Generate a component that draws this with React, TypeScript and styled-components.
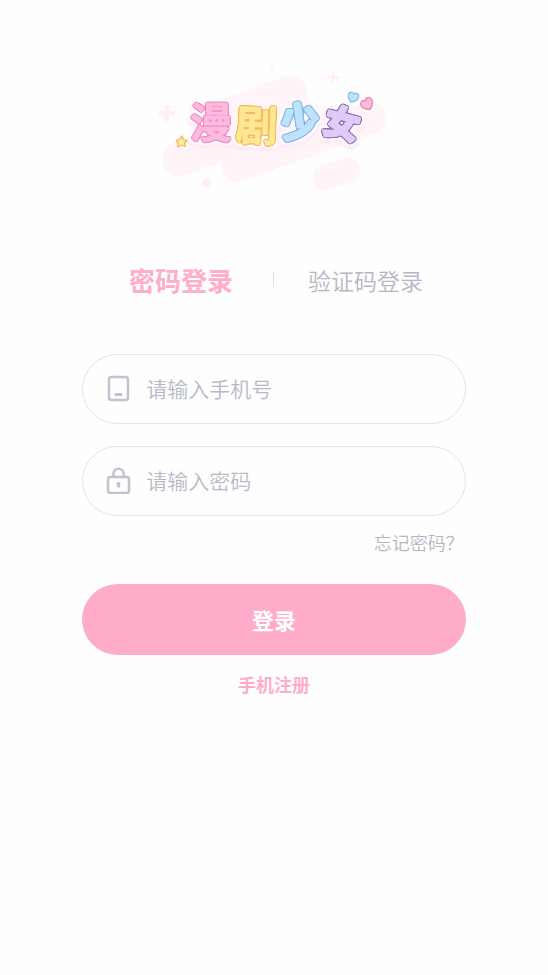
import React, { useState } from 'react';
import styled, { createGlobalStyle } from 'styled-components';

const GlobalStyle = createGlobalStyle`
  *, *::before, *::after { box-sizing: border-box; }
  body {
    margin: 0;
    background: #fefefe;
    font-family: "Noto Sans CJK SC", "Noto Sans", sans-serif;
  }
  button, input { font-family: inherit; }
`;

const Page = styled.main`
  display: flex;
  flex-direction: column;
  align-items: center;
  min-height: 100vh;
  padding: 60px 0;
`;

const Brand = styled.h1`
  margin: 0;
  line-height: 0;
`;

const LogoArt = styled.svg`
  display: block;
  width: 240px;
  height: 140px;
`;

const LogoGlyph = styled.text`
  font-family: "Noto Sans CJK SC", sans-serif;
  font-weight: 700;
  text-anchor: middle;
  stroke-linejoin: round;
`;

const Tabs = styled.div`
  display: flex;
  align-items: center;
  justify-content: center;
  height: 48px;
  margin-top: 56px;
  padding-left: 4px;
`;

const Tab = styled.button<{ $active: boolean }>`
  padding: 0;
  border: 0;
  background: none;
  cursor: pointer;
  line-height: 40px;
  font-size: ${(p) => (p.$active ? 26 : 23)}px;
  font-weight: ${(p) => (p.$active ? 700 : 350)};
  color: ${(p) => (p.$active ? '#ffadc9' : '#b5b7c2')};
`;

const Divider = styled.span`
  width: 1px;
  height: 15px;
  margin: 0 34px 2px 40px;
  background: #dedfe5;
`;

const Form = styled.form`
  display: flex;
  flex-direction: column;
  width: 70%;
  margin-top: 50px;
`;

const Field = styled.label`
  display: flex;
  align-items: center;
  gap: 15px;
  height: 70px;
  margin-bottom: 22px;
  padding: 0 24px 2px 23px;
  border: 1px solid #e4e4e7;
  border-radius: 35px;
`;

const FieldIcon = styled.svg`
  flex: none;
  width: 25px;
  height: 28px;
  fill: none;
  stroke: #bfc4ce;
  stroke-width: 2.5;
  stroke-linecap: round;
  stroke-linejoin: round;
`;

const Input = styled.input`
  flex: 1;
  min-width: 0;
  height: 40px;
  padding: 0;
  border: 0;
  outline: 0;
  background: transparent;
  font-size: 21px;
  font-weight: 350;
  color: #555866;
  &::placeholder { color: #b7bac6; opacity: 1; }
`;

const ForgotLink = styled.a`
  align-self: flex-end;
  margin: -10px 2px 0 0;
  font-size: 18px;
  line-height: 28px;
  font-weight: 350;
  color: #b2b8c3;
  text-decoration: none;
`;

const Submit = styled.button`
  height: 71px;
  margin-top: 28px;
  padding: 0 0 2px;
  border: 0;
  border-radius: 36px;
  background: #ffabca;
  color: #fff;
  font-size: 22px;
  font-weight: 700;
  cursor: pointer;
`;

const RegisterLink = styled.a`
  margin-top: 15px;
  font-size: 18px;
  line-height: 28px;
  font-weight: 700;
  color: #ffadc9;
  text-decoration: none;
`;

const glyphs = [
  { char: '漫', x: 57, y: 78, size: 42, weight: 0.6, rotate: 0, fill: '#ffb9e0', edge: 'pink' },
  { char: '剧', x: 102, y: 81, size: 42, weight: 0.8, rotate: 2, fill: '#ffe794', edge: 'gold' },
  { char: '少', x: 148, y: 75, size: 38, weight: 3, rotate: -8, fill: '#bee2fb', edge: 'blue' },
  { char: '女', x: 185, y: 76, size: 35, weight: 3, rotate: 14, fill: '#dfcaf8', edge: 'violet' },
];

const edges = [
  { id: 'pink', color: '#ee8cc1' },
  { id: 'gold', color: '#f3bb5c' },
  { id: 'blue', color: '#7fb9e6' },
  { id: 'violet', color: '#8c73b0' },
];

const HEART = 'M0 5.500 C-4 3 -6.500 0 -4.500 -3 C-3 -5 -1 -4.500 0 -3 C1 -5 4 -5.500 5 -3 C6.500 0 4 3.500 0 5.500 Z';

function Logo() {
  return (
    <LogoArt viewBox="0 0 240 140">
      <defs>
        {edges.map((e) => (
          <filter key={e.id} id={`edge-${e.id}`} x="-30%" y="-30%" width="160%" height="160%" colorInterpolationFilters="sRGB">
            <feGaussianBlur in="SourceAlpha" stdDeviation="0.9" />
            <feComponentTransfer result="rim">
              <feFuncA type="linear" slope="9" intercept="-0.9" />
            </feComponentTransfer>
            <feFlood floodColor={e.color} />
            <feComposite in2="rim" operator="in" result="rimColor" />
            <feMorphology in="SourceAlpha" operator="dilate" radius="3" />
            <feGaussianBlur stdDeviation="0.8" result="halo" />
            <feFlood floodColor="#fffafd" />
            <feComposite in2="halo" operator="in" result="haloColor" />
            <feOffset in="halo" dy="2" result="low" />
            <feFlood floodColor="#ffe1f0" />
            <feComposite in2="low" operator="in" result="lowColor" />
            <feMerge>
              <feMergeNode in="lowColor" />
              <feMergeNode in="haloColor" />
              <feMergeNode in="rimColor" />
              <feMergeNode in="SourceGraphic" />
            </feMerge>
          </filter>
        ))}
      </defs>
      <g stroke="#fff4f8" strokeLinecap="round" fill="none">
        <path d="M58 60 L137 31" strokeWidth="32" />
        <path d="M25 99 L150 56" strokeWidth="34" />
        <path d="M84 106 L216 58" strokeWidth="32" />
        <path d="M171 118 L194 110" strokeWidth="25" />
      </g>
      <g stroke="#fff0f5" strokeWidth="5" strokeLinecap="round">
        <path d="M13 47 V59 M7 53 H19" />
        <path d="M179 13 V22 M174.500 17.500 H183.500" strokeWidth="3" />
      </g>
      <circle cx="53" cy="123" r="4.500" fill="#ffedf3" />
      <circle cx="118" cy="9" r="3" fill="#fff4f8" />
      {glyphs.map((g) => (
        <g key={g.char} filter={`url(#edge-${g.edge})`}>
          <LogoGlyph
            x="0"
            y="0"
            fontSize={g.size}
            fill={g.fill}
            stroke={g.fill}
            strokeWidth={g.weight}
            transform={`translate(${g.x} ${g.y}) rotate(${g.rotate})`}
          >
            {g.char}
          </LogoGlyph>
        </g>
      ))}
      <path
        d="M28 76 L29.500 79.500 L33 80.500 L30.500 83 L31 86.500 L27.500 85 L24 87 L24 83 L22 80.500 L25.500 79.500 Z"
        fill="#fff0a0" stroke="#f4b95b" strokeWidth="1.300" strokeLinejoin="round"
      />
      <g strokeLinejoin="round" strokeWidth="1.300">
        <path d={HEART} transform="translate(199 37) rotate(18)" stroke="#fff" strokeWidth="5" fill="#fff" />
        <path d={HEART} transform="translate(213 44) rotate(-28) scale(1.150)" stroke="#fff" strokeWidth="5" fill="#fff" />
        <path d={HEART} transform="translate(199 37) rotate(18)" stroke="#7fbde8" fill="#bee4fb" />
        <path d={HEART} transform="translate(213 44) rotate(-28) scale(1.150)" stroke="#ee87b5" fill="#ffbfdc" />
      </g>
    </LogoArt>
  );
}

export default function App() {
  const [mode, setMode] = useState<'password' | 'code'>('password');
  return (
    <>
      <GlobalStyle />
      <Page>
        <Brand>
          <Logo />
        </Brand>
        <Tabs role="tablist">
          <Tab type="button" role="tab" aria-selected={mode === 'password'} $active={mode === 'password'} onClick={() => setMode('password')}>
            密码登录
          </Tab>
          <Divider />
          <Tab type="button" role="tab" aria-selected={mode === 'code'} $active={mode === 'code'} onClick={() => setMode('code')}>
            验证码登录
          </Tab>
        </Tabs>
        <Form onSubmit={(e) => e.preventDefault()}>
          <Field>
            <FieldIcon viewBox="0 0 25 28" aria-hidden="true">
              <rect x="3" y="3" width="19" height="23" rx="2.500" />
              <path d="M10 20.500 H15" strokeWidth="3" />
            </FieldIcon>
            <Input type="tel" placeholder="请输入手机号" aria-label="请输入手机号" />
          </Field>
          <Field>
            <FieldIcon viewBox="0 0 25 28" aria-hidden="true">
              <rect x="2" y="11" width="21" height="16" rx="2.500" />
              <path d="M7.500 10.500 V7.500 C7.500 1 17.500 1 17.500 7.500 V10.500" />
              <path d="M12.500 17.500 V20" strokeWidth="3.500" />
            </FieldIcon>
            <Input type="password" placeholder="请输入密码" aria-label="请输入密码" />
          </Field>
          <ForgotLink href="#forgot">忘记密码？</ForgotLink>
          <Submit type="submit">登录</Submit>
        </Form>
        <RegisterLink href="#register">手机注册</RegisterLink>
      </Page>
    </>
  );
}
